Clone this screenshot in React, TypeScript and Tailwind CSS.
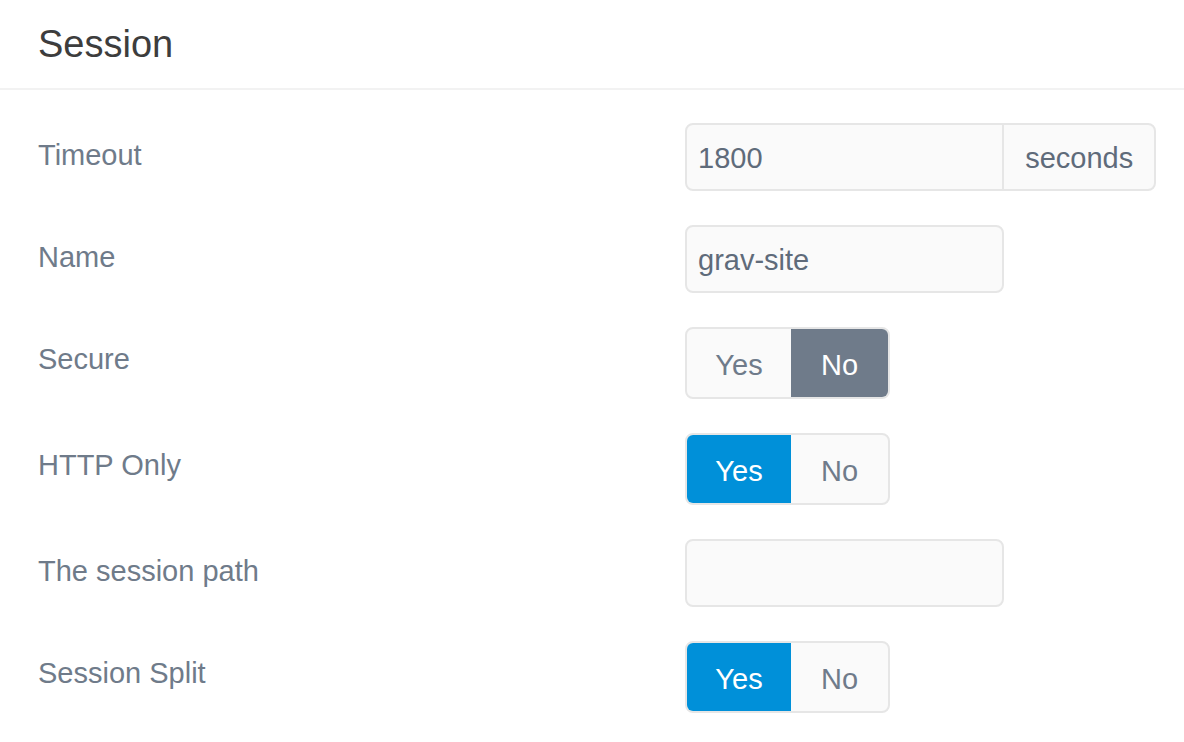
import React from "react";

const font = { fontFamily: '"Liberation Sans", Arial, sans-serif' };

function Label({ children }: { children: React.ReactNode }) {
  return (
    <div className="w-[647px] shrink-0 pt-[14px] text-[29px] leading-[36px] text-[#6f7b8a]">
      {children}
    </div>
  );
}

function TextInput({ value, addon }: { value: string; addon?: string }) {
  return (
    <div className="flex h-[68px] rounded-[8px] border-2 border-[#e6e6e6] bg-[#fafafa] text-[29px] text-[#5f6b7a]">
      <div className="flex w-[316px] items-center px-[11px] pt-[4px]">{value}</div>
      {addon && (
        <div className="flex w-[152px] items-center justify-center border-l-2 border-[#e6e6e6] pt-[4px]">
          {addon}
        </div>
      )}
    </div>
  );
}

function Toggle({ value }: { value: "yes" | "no" }) {
  const on = "bg-[#0090d9] text-white";
  const off = "text-[#6f7b8a]";
  return (
    <div className="flex h-[72px] w-[205px] overflow-hidden rounded-[8px] border-2 border-[#e6e6e6] bg-[#fafafa] text-[29px]">
      <div className={"flex w-[104px] items-center justify-center pt-[5px] " + (value === "yes" ? on : off)}>
        Yes
      </div>
      <div
        className={
          "flex flex-1 items-center justify-center pt-[5px] " +
          (value === "no" ? "bg-[#6f7b8a] text-white" : off)
        }
      >
        No
      </div>
    </div>
  );
}

export default function App() {
  return (
    <div className="min-h-[742px] w-[1184px] bg-white" style={font}>
      <div className="flex h-[90px] items-center border-b-2 border-[#f2f2f2] px-[38px]">
        <h1 className="text-[38px] text-[#3d3d3d]">Session</h1>
      </div>
      <div className="flex flex-col gap-[34px] px-[38px] pt-[33px]">
        <div className="flex">
          <Label>Timeout</Label>
          <div className="w-[471px]">
            <TextInput value="1800" addon="seconds" />
          </div>
        </div>
        <div className="flex">
          <Label>Name</Label>
          <div className="w-[319px]">
            <TextInput value="grav-site" />
          </div>
        </div>
        <div className="flex">
          <Label>Secure</Label>
          <Toggle value="no" />
        </div>
        <div className="flex">
          <Label>HTTP Only</Label>
          <Toggle value="yes" />
        </div>
        <div className="flex">
          <Label>The session path</Label>
          <div className="w-[319px]">
            <TextInput value="" />
          </div>
        </div>
        <div className="flex">
          <Label>Session Split</Label>
          <Toggle value="yes" />
        </div>
      </div>
    </div>
  );
}
